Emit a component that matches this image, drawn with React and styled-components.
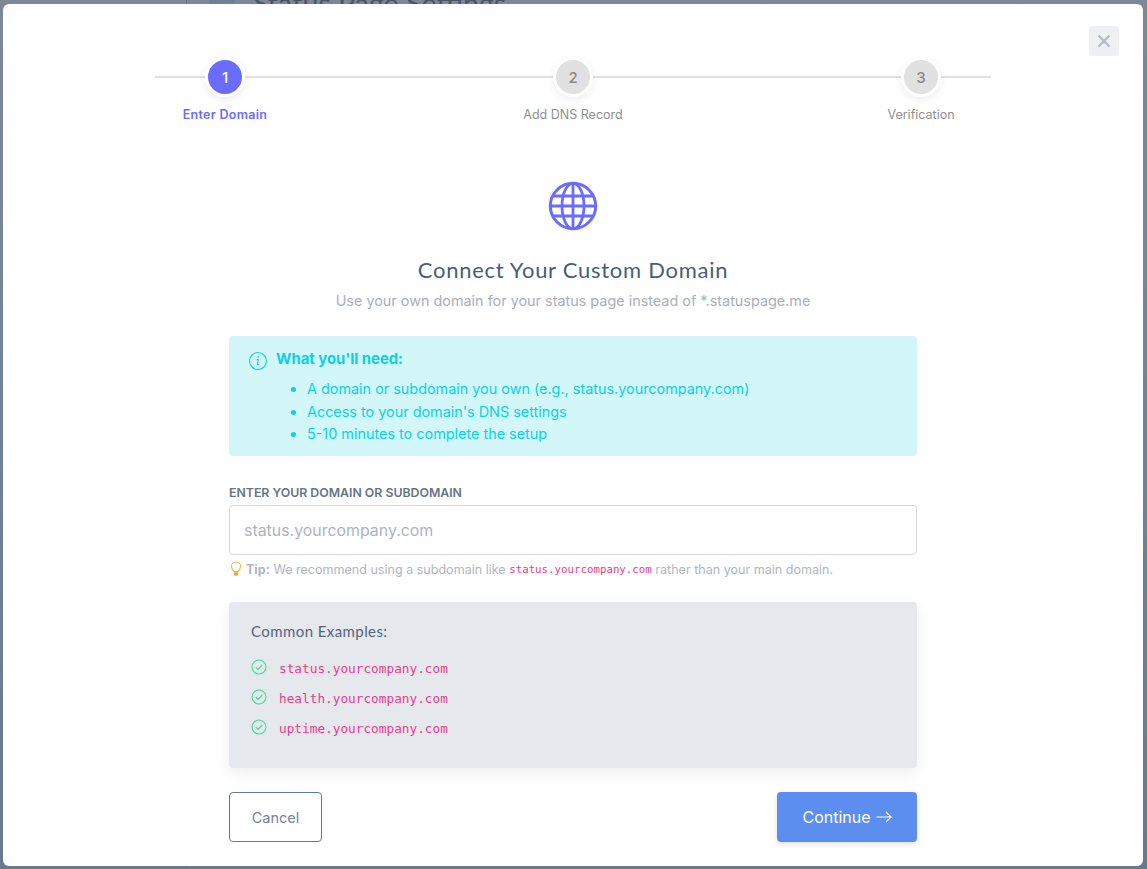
import React from "react";
import styled, { createGlobalStyle } from "styled-components";

const Global = createGlobalStyle`
  html, body { margin: 0; padding: 0; height: 100%; }
  body { font-family: Inter, "Liberation Sans", sans-serif; overflow: hidden; background: #76808f; }
  * { box-sizing: border-box; }
`;

const Backdrop = styled.div`
  position: relative;
  width: 1147px;
  height: 869px;
  padding: 4px 4px 3px 3px;
  background: linear-gradient(180deg, #7c8798 0%, #748497 40%, #6a798d 100%);
  overflow: hidden;
`;

const BehindSidebar = styled.div`
  position: absolute;
  left: 0;
  top: 0;
  bottom: 0;
  width: 187px;
  border-right: 1px solid #6a7688;
`;

const BehindAvatar = styled.div`
  position: absolute;
  left: 209px;
  top: -10px;
  width: 26px;
  height: 26px;
  border-radius: 50%;
  background: #6f7f9a;
`;

const BehindTitle = styled.div`
  position: absolute;
  left: 253px;
  top: -14px;
  font: 400 28.6px Lato, sans-serif;
  color: #4a5566;
`;

const Modal = styled.div`
  position: relative;
  width: 1140px;
  height: 862px;
  background: #fff;
  border-radius: 6px;
  padding-top: 53px;
`;

const CloseButton = styled.button`
  position: absolute;
  top: 22px;
  right: 24px;
  width: 30px;
  height: 30px;
  border: 0;
  padding: 0;
  border-radius: 3px;
  background: #eff0f2;
  color: #b3bac4;
  display: flex;
  align-items: center;
  justify-content: center;
`;

const Stepper = styled.div`
  position: relative;
  width: 836px;
  margin-left: 152px;
  height: 71px;
  display: grid;
  grid-template-columns: 140px 1fr 140px;
`;

const StepLine = styled.div`
  position: absolute;
  left: 0;
  right: 0;
  top: 19px;
  height: 2px;
  background: #e1e1e1;
`;

const Step = styled.div`
  position: relative;
  display: flex;
  flex-direction: column;
  align-items: center;
`;

const StepCircle = styled.div`
  width: 40px;
  height: 40px;
  border-radius: 50%;
  border: 3px solid #fff;
  box-shadow: 0 3px 8px rgba(0, 0, 0, 0.07);
  background: ${p => (p.$active ? "#6a6cff" : "#e1e1e1")};
  color: ${p => (p.$active ? "#fff" : "#8a8a8a")};
  display: flex;
  align-items: center;
  justify-content: center;
  font-size: 15px;
  font-weight: 500;
`;

const StepLabel = styled.div`
  margin-top: 8px;
  font-size: 12.5px;
  line-height: 20px;
  white-space: nowrap;
  letter-spacing: ${p => (p.$active ? "0.3px" : "0")};
  font-weight: ${p => (p.$active ? 600 : 400)};
  color: ${p => (p.$active ? "#6a6cff" : "#8f8f8f")};
`;

const Content = styled.div`
  width: 688px;
  margin: 0 0 0 226px;
`;

const Head = styled.div`
  display: flex;
  flex-direction: column;
  align-items: center;
  padding-top: 53px;
`;

const Title = styled.h2`
  margin: 24px 0 0;
  font: 400 22px/30px Lato, sans-serif;
  letter-spacing: 0.73px;
  color: #4b5d73;
`;

const Subtitle = styled.p`
  margin: 6px 0 0;
  font-size: 14.4px;
  line-height: 20px;
  color: #a9b0bb;
`;

const InfoBox = styled.div`
  margin-top: 25px;
  height: 120px;
  padding: 13px 20px 13px 19px;
  background: #d3f6f9;
  border-radius: 4px;
  color: #0bd2e3;
  display: grid;
  grid-template-columns: 28px 1fr;
`;

const InfoTitle = styled.div`
  font-size: 14.85px;
  line-height: 20px;
  font-weight: 700;
`;

const InfoList = styled.ul`
  margin: 9px 0 0;
  padding: 0 0 0 31px;
  font-size: 14.4px;
  line-height: 22.5px;
`;

const FieldLabel = styled.label`
  display: block;
  margin-top: 29px;
  font-size: 12.3px;
  line-height: 16px;
  font-weight: 600;
  color: #677486;
  text-transform: uppercase;
`;

const Input = styled.input`
  display: block;
  width: 100%;
  height: 50px;
  margin-top: 4px;
  padding: 0 14px;
  border: 1px solid #d3d6da;
  border-radius: 4px;
  font: 400 15.9px Inter, sans-serif;
  outline: none;
  &::placeholder { color: #aeb4be; opacity: 1; }
`;

const Tip = styled.div`
  margin-top: 5px;
  display: flex;
  align-items: center;
  height: 18px;
  font-size: 12.55px;
  color: #b0b6c0;
  white-space: pre;
  strong { font-weight: 700; margin-left: 3px; }
  svg { flex: none; }
`;

const Code = styled.code`
  font-family: "DejaVu Sans Mono", monospace;
  font-size: ${p => p.$size || 10.78}px;
  color: #e83e8c;
`;

const Examples = styled.div`
  margin-top: 24px;
  height: 166px;
  padding: 19px 22px;
  background: #e5e8ec;
  border-radius: 4px;
  box-shadow: 0 5px 15px rgba(0, 0, 0, 0.07);
`;

const ExamplesTitle = styled.div`
  font: 400 15px/20px Lato, sans-serif;
  letter-spacing: 0.42px;
  color: #56657a;
  margin-bottom: 12px;
`;

const ExampleRow = styled.div`
  display: flex;
  align-items: center;
  height: 30px;
  gap: 12px;
  svg { margin-top: -3px; }
`;

const Actions = styled.div`
  margin-top: 24px;
  display: flex;
  justify-content: space-between;
`;

const CancelButton = styled.button`
  width: 93px;
  height: 50px;
  background: #fff;
  border: 1px solid #64799a;
  border-radius: 4px;
  color: #73849c;
  font: 400 14.5px Inter, sans-serif;
`;

const ContinueButton = styled.button`
  width: 140px;
  height: 50px;
  border: 0;
  padding: 0;
  border-radius: 4px;
  background: #5c8eef;
  color: #fff;
  font: 400 16px Inter, sans-serif;
  box-shadow: 0 2px 6px rgba(0, 0, 0, 0.12);
  display: flex;
  align-items: center;
  justify-content: center;
  gap: 5px;
`;

const Globe = () => (
  <svg width="50" height="50" viewBox="0 0 50 50" fill="none" stroke="#6a6cff" strokeWidth="2.8">
    <circle cx="25" cy="25" r="22.7" strokeWidth="3" />
    <ellipse cx="25" cy="25" rx="11" ry="22.7" />
    <path d="M25 2v46M2 25h46M4.5 15h41M4.5 35h41" />
  </svg>
);

const InfoIcon = () => (
  <svg width="20" height="20" viewBox="0 0 20 20" fill="none" stroke="#0bd2e3" style={{ marginTop: 2 }}>
    <circle cx="10" cy="10" r="8.5" strokeWidth="1.1" />
    <path d="M8.6 8.6h1.7l-1 5h1.5" strokeWidth="1.1" />
    <circle cx="10.3" cy="5.9" r="0.8" fill="#0bd2e3" stroke="none" />
  </svg>
);

const Bulb = () => (
  <svg width="14" height="16" viewBox="0 0 14 16" fill="none">
    <path d="M4.9 10.6C4.4 9 2.4 8.2 2.4 5.6a4.6 4.6 0 0 1 9.2 0c0 2.6-2 3.4-2.5 5z" stroke="#f9b43c" strokeWidth="1.1" />
    <path d="M5 11.2h4v2.2a1.5 1.5 0 0 1-1.5 1.4h-1A1.5 1.5 0 0 1 5 13.4z" fill="#f9a825" />
  </svg>
);

const CheckIcon = () => (
  <svg width="16" height="16" viewBox="0 0 16 16" fill="none" stroke="#3ddc97" strokeWidth="1.1">
    <circle cx="8" cy="8" r="7" />
    <path d="M4.8 8.2l2.2 2.2 4.2-4.4" strokeWidth="1.2" />
  </svg>
);

const CloseIcon = () => (
  <svg width="14" height="14" viewBox="0 0 14 14" fill="none" stroke="currentColor" strokeWidth="2.2">
    <path d="M1.5 1.5l11 11M12.5 1.5l-11 11" />
  </svg>
);

const ArrowIcon = () => (
  <svg width="16" height="12" viewBox="0 0 16 12" fill="none" stroke="#fff" strokeWidth="1.2">
    <path d="M0.5 6h14.5M10 1l5 5-5 5" />
  </svg>
);

const steps = ["Enter Domain", "Add DNS Record", "Verification"];
const examples = ["status.yourcompany.com", "health.yourcompany.com", "uptime.yourcompany.com"];

export default function App() {
  return (
    <Backdrop>
      <Global />
      <BehindSidebar />
      <BehindAvatar />
      <BehindTitle>Status Page Settings</BehindTitle>
      <Modal>
        <CloseButton aria-label="Close"><CloseIcon /></CloseButton>
        <Stepper>
          <StepLine />
          {steps.map((s, i) => (
            <Step key={s}>
              <StepCircle $active={i === 0}>{i + 1}</StepCircle>
              <StepLabel $active={i === 0}>{s}</StepLabel>
            </Step>
          ))}
        </Stepper>
        <Content>
          <Head>
            <Globe />
            <Title>Connect Your Custom Domain</Title>
            <Subtitle>Use your own domain for your status page instead of *.statuspage.me</Subtitle>
          </Head>
          <InfoBox>
            <InfoIcon />
            <div>
              <InfoTitle>What you'll need:</InfoTitle>
              <InfoList>
                <li>A domain or subdomain you own (e.g., status.yourcompany.com)</li>
                <li>Access to your domain's DNS settings</li>
                <li>5-10 minutes to complete the setup</li>
              </InfoList>
            </div>
          </InfoBox>
          <FieldLabel>Enter your domain or subdomain</FieldLabel>
          <Input placeholder="status.yourcompany.com" />
          <Tip>
            <Bulb />
            <strong>Tip:</strong> We recommend using a subdomain like <Code>status.yourcompany.com</Code> rather than your main domain.
          </Tip>
          <Examples>
            <ExamplesTitle>Common Examples:</ExamplesTitle>
            {examples.map(e => (
              <ExampleRow key={e}>
                <CheckIcon />
                <Code $size={12.75}>{e}</Code>
              </ExampleRow>
            ))}
          </Examples>
          <Actions>
            <CancelButton>Cancel</CancelButton>
            <ContinueButton>Continue <ArrowIcon /></ContinueButton>
          </Actions>
        </Content>
      </Modal>
    </Backdrop>
  );
}
